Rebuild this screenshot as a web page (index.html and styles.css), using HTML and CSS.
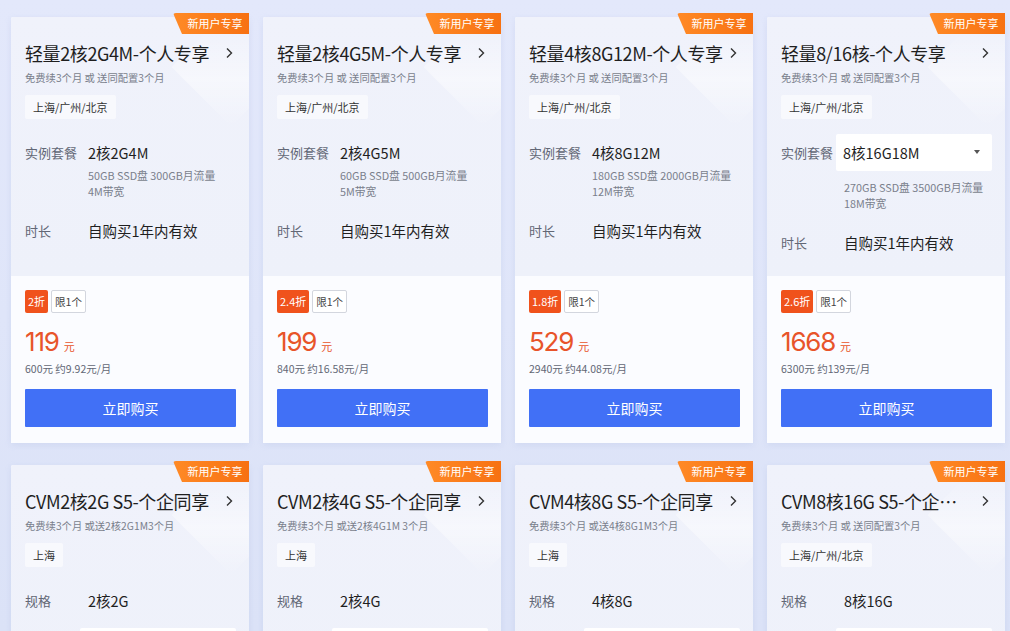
FILE: index.html
```html
<!DOCTYPE html>
<html lang="zh-CN">
<head>
<meta charset="utf-8">
<title>新用户专享</title>
<link rel="stylesheet" href="styles.css">
</head>
<body>
<div class="page">
  <div class="grid">

    <div class="card">
      <div class="badge">新用户专享</div>
      <div class="top">
        <div class="title-row"><span class="title">轻量2核2G4M-个人专享</span><svg class="chev" viewBox="0 0 8 12"><path d="M2 1.5 L6.5 6 L2 10.5"/></svg></div>
        <div class="sub">免费续3个月 或 送同配置3个月</div>
        <div class="tag">上海/广州/北京</div>
        <div class="row"><span class="label">实例套餐</span><span class="value">2核2G4M</span></div>
        <div class="desc">50GB SSD盘 300GB月流量<br>4M带宽</div>
        <div class="row row-gap"><span class="label">时长</span><span class="value">自购买1年内有效</span></div>
      </div>
      <div class="bottom">
        <div class="chips"><span class="disc">2折</span><span class="limit">限1个</span></div>
        <div class="price"><span class="num">119</span><span class="yuan">元</span></div>
        <div class="old">600元 约9.92元/月</div>
        <div class="buy">立即购买</div>
      </div>
    </div>

    <div class="card">
      <div class="badge">新用户专享</div>
      <div class="top">
        <div class="title-row"><span class="title">轻量2核4G5M-个人专享</span><svg class="chev" viewBox="0 0 8 12"><path d="M2 1.5 L6.5 6 L2 10.5"/></svg></div>
        <div class="sub">免费续3个月 或 送同配置3个月</div>
        <div class="tag">上海/广州/北京</div>
        <div class="row"><span class="label">实例套餐</span><span class="value">2核4G5M</span></div>
        <div class="desc">60GB SSD盘 500GB月流量<br>5M带宽</div>
        <div class="row row-gap"><span class="label">时长</span><span class="value">自购买1年内有效</span></div>
      </div>
      <div class="bottom">
        <div class="chips"><span class="disc">2.4折</span><span class="limit">限1个</span></div>
        <div class="price"><span class="num">199</span><span class="yuan">元</span></div>
        <div class="old">840元 约16.58元/月</div>
        <div class="buy">立即购买</div>
      </div>
    </div>

    <div class="card">
      <div class="badge">新用户专享</div>
      <div class="top">
        <div class="title-row"><span class="title">轻量4核8G12M-个人专享</span><svg class="chev" viewBox="0 0 8 12"><path d="M2 1.5 L6.5 6 L2 10.5"/></svg></div>
        <div class="sub">免费续3个月 或 送同配置3个月</div>
        <div class="tag">上海/广州/北京</div>
        <div class="row"><span class="label">实例套餐</span><span class="value">4核8G12M</span></div>
        <div class="desc">180GB SSD盘 2000GB月流量<br>12M带宽</div>
        <div class="row row-gap"><span class="label">时长</span><span class="value">自购买1年内有效</span></div>
      </div>
      <div class="bottom">
        <div class="chips"><span class="disc">1.8折</span><span class="limit">限1个</span></div>
        <div class="price"><span class="num">529</span><span class="yuan">元</span></div>
        <div class="old">2940元 约44.08元/月</div>
        <div class="buy">立即购买</div>
      </div>
    </div>

    <div class="card">
      <div class="badge">新用户专享</div>
      <div class="top">
        <div class="title-row"><span class="title">轻量8/16核-个人专享</span><svg class="chev" viewBox="0 0 8 12"><path d="M2 1.5 L6.5 6 L2 10.5"/></svg></div>
        <div class="sub">免费续3个月 或 送同配置3个月</div>
        <div class="tag">上海/广州/北京</div>
        <div class="row row-select"><span class="label">实例套餐</span><span class="select">8核16G18M<span class="caret"></span></span></div>
        <div class="desc desc-sel">270GB SSD盘 3500GB月流量<br>18M带宽</div>
        <div class="row row-gap"><span class="label">时长</span><span class="value">自购买1年内有效</span></div>
      </div>
      <div class="bottom">
        <div class="chips"><span class="disc">2.6折</span><span class="limit">限1个</span></div>
        <div class="price"><span class="num">1668</span><span class="yuan">元</span></div>
        <div class="old">6300元 约139元/月</div>
        <div class="buy">立即购买</div>
      </div>
    </div>

    <div class="card">
      <div class="badge">新用户专享</div>
      <div class="top">
        <div class="title-row"><span class="title">CVM2核2G S5-个企同享</span><svg class="chev" viewBox="0 0 8 12"><path d="M2 1.5 L6.5 6 L2 10.5"/></svg></div>
        <div class="sub">免费续3个月 或送2核2G1M3个月</div>
        <div class="tag">上海</div>
        <div class="row"><span class="label">规格</span><span class="value">2核2G</span></div>
        <div class="stub"></div>
      </div>
    </div>

    <div class="card">
      <div class="badge">新用户专享</div>
      <div class="top">
        <div class="title-row"><span class="title">CVM2核4G S5-个企同享</span><svg class="chev" viewBox="0 0 8 12"><path d="M2 1.5 L6.5 6 L2 10.5"/></svg></div>
        <div class="sub">免费续3个月 或送2核4G1M 3个月</div>
        <div class="tag">上海</div>
        <div class="row"><span class="label">规格</span><span class="value">2核4G</span></div>
        <div class="stub"></div>
      </div>
    </div>

    <div class="card">
      <div class="badge">新用户专享</div>
      <div class="top">
        <div class="title-row"><span class="title">CVM4核8G S5-个企同享</span><svg class="chev" viewBox="0 0 8 12"><path d="M2 1.5 L6.5 6 L2 10.5"/></svg></div>
        <div class="sub">免费续3个月 或送4核8G1M3个月</div>
        <div class="tag">上海</div>
        <div class="row"><span class="label">规格</span><span class="value">4核8G</span></div>
        <div class="stub"></div>
      </div>
    </div>

    <div class="card">
      <div class="badge">新用户专享</div>
      <div class="top">
        <div class="title-row"><span class="title title-clip">CVM8核16G S5-个企同享</span><svg class="chev" viewBox="0 0 8 12"><path d="M2 1.5 L6.5 6 L2 10.5"/></svg></div>
        <div class="sub">免费续3个月 或 送同配置3个月</div>
        <div class="tag">上海/广州/北京</div>
        <div class="row"><span class="label">规格</span><span class="value">8核16G</span></div>
        <div class="stub"></div>
      </div>
    </div>

  </div>
</div>
</body>
</html>
```

FILE: styles.css
```css
* { box-sizing: border-box; }
html, body {
  margin: 0;
  padding: 0;
  width: 1010px;
  height: 631px;
  overflow: hidden;
  background: #dfe5f8;
  font-family: "Noto Sans CJK SC", "Noto Sans", sans-serif;
  color: #222;
}
.page {
  padding: 17px 5px 0 11px;
  background: linear-gradient(180deg, #e3e8fb 0%, #dbe2f7 100%);
  height: 631px;
  overflow: hidden;
}
.grid {
  display: grid;
  grid-template-columns: repeat(4, 238px);
  column-gap: 14px;
  row-gap: 22px;
}
.card {
  position: relative;
  border-radius: 2px;
  background: #fbfcff;
  box-shadow: 0 2px 6px rgba(150, 165, 215, 0.18);
}
.top {
  position: relative;
  height: 259px;
  padding: 23px 13px 0 14px;
  background: linear-gradient(180deg, #f0f2fb 0%, #eef1fa 100%);
  border-radius: 2px 2px 0 0;
  overflow: hidden;
}
.top::before {
  content: "";
  position: absolute;
  right: -24px;
  top: 8px;
  width: 84px;
  height: 84px;
  transform: rotate(45deg);
  background: linear-gradient(135deg, rgba(255,255,255,0) 20%, rgba(255,255,255,0.45) 60%, rgba(255,255,255,0) 100%);
  pointer-events: none;
}
.top > * { position: relative; }
.badge {
  position: absolute;
  z-index: 2;
  top: -4px;
  right: 0;
  width: 76px;
  height: 21px;
  padding-left: 8px;
  font-size: 11px;
  line-height: 21px;
  text-align: center;
  color: #fff;
  background: linear-gradient(90deg, #ff8a26 0%, #f77112 100%);
  clip-path: polygon(0 0, 100% 0, 100% 100%, 9px 100%);
  border-top-left-radius: 3px;
}
.title-row {
  display: flex;
  align-items: center;
  height: 26px;
}
.title {
  flex: 1;
  min-width: 0;
  font-size: 18px;
  letter-spacing: -0.4px;
  line-height: 26px;
  color: #1f1f1f;
  white-space: nowrap;
  overflow: hidden;
  text-overflow: ellipsis;
  padding-right: 4px;
}
.title-clip {
  flex: none;
  width: 184px;
  margin-right: auto;
}
.chev {
  width: 8px;
  height: 12px;
  flex: none;
  margin-right: 3px;
  fill: none;
  stroke: #333;
  stroke-width: 1.4;
}
.sub {
  margin-top: 4px;
  font-size: 10.3px;
  line-height: 16px;
  color: #7a7f8c;
  white-space: nowrap;
}
.tag {
  display: inline-block;
  margin-top: 9px;
  height: 24px;
  padding: 0 8px;
  font-size: 11px;
  line-height: 24px;
  color: #333;
  background: #f8f9fd;
  border-radius: 2px;
}
.row {
  display: flex;
  align-items: center;
  margin-top: 22px;
  height: 22px;
}
.row-gap { margin-top: 20px; }
.label {
  width: 63px;
  flex: none;
  font-size: 13px;
  color: #626775;
  white-space: nowrap;
}
.value {
  font-size: 14.5px;
  color: #1f1f1f;
}
.desc {
  margin-top: 4px;
  padding-left: 63px;
  font-size: 10.8px;
  line-height: 16px;
  color: #7a7f8c;
}
.row-select {
  height: 37px;
  margin-top: 15px;
}
.row-select .label { width: 55px; }
.select {
  position: relative;
  flex: 1;
  height: 37px;
  padding-left: 7px;
  font-size: 14.5px;
  line-height: 37px;
  color: #1f1f1f;
  background: #fff;
  border-radius: 2px;
}
.caret {
  position: absolute;
  right: 12px;
  top: 16px;
  width: 0;
  height: 0;
  border-left: 3px solid transparent;
  border-right: 3px solid transparent;
  border-top: 4px solid #555;
}
.desc-sel { margin-top: 8px; }
.stub {
  margin: 17px 0 0 55px;
  height: 37px;
  background: #fff;
  border-radius: 2px;
}
.bottom {
  height: 167px;
  padding: 14px 13px 0 14px;
  background: #fbfcff;
}
.chips {
  display: flex;
  gap: 3px;
  height: 23px;
}
.disc {
  height: 23px;
  padding: 0 3px;
  font-size: 11px;
  line-height: 23px;
  color: #fff;
  background: #f0521c;
  border-radius: 2px;
}
.limit {
  height: 23px;
  padding: 0 3px;
  font-size: 10.5px;
  line-height: 21px;
  color: #444;
  background: #fff;
  border: 1px solid #d3d6de;
  border-radius: 2px;
}
.price {
  margin-top: 14px;
  height: 30px;
  display: flex;
  align-items: baseline;
  color: #e8542a;
}
.num {
  font-family: "Inter", "Noto Sans", sans-serif;
  font-size: 26px;
  line-height: 30px;
  letter-spacing: -1.2px;
}
.yuan {
  margin-left: 5px;
  font-size: 11px;
}
.old {
  margin-top: 4px;
  font-size: 10.5px;
  line-height: 16px;
  color: #626775;
}
.buy {
  margin-top: 12px;
  height: 38px;
  font-size: 14px;
  line-height: 38px;
  text-align: center;
  color: #fff;
  background: #4170f6;
  border-radius: 1px;
}
```
